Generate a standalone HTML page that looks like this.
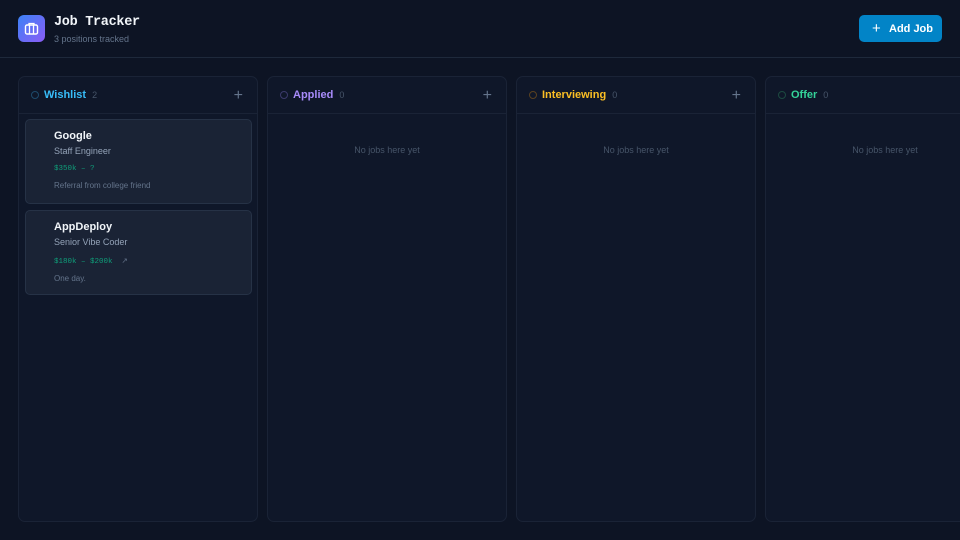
<!DOCTYPE html>
<html><head><meta charset="utf-8"><style>
*{box-sizing:border-box;margin:0;padding:0}
body{width:960px;height:540px;overflow:hidden;background:#0d1424;font-family:"Liberation Sans",sans-serif;position:relative}
.hdr{position:absolute;left:0;top:0;width:960px;height:58px;border-bottom:1px solid #1e293b}
.logo{position:absolute;left:18px;top:15px;width:27px;height:27px;border-radius:6px;background:linear-gradient(135deg,#3b82f6,#8b5cf6)}
.title{position:absolute;left:54px;top:15px;font-family:"Liberation Mono",monospace;font-weight:bold;font-size:13.5px;color:#f1f5f9;letter-spacing:-0.3px}
.sub{position:absolute;left:54px;top:34px;font-size:9px;color:#64748b}
.btn{position:absolute;left:859px;top:15px;width:83px;height:27px;border-radius:5px;background:#0284c7;color:#fff;font-weight:bold;font-size:11px;line-height:28px;padding-left:30px}
.btn:before{content:"+";position:absolute;left:13px;top:0px;font-size:15px;font-weight:normal}
.col{position:absolute;top:76px;width:240px;height:446px;border:1px solid #1a2336;border-radius:7px;background:#0f1729}
.ch{height:37px;border-bottom:1px solid #1a2336;position:relative}
.dot{position:absolute;left:12px;top:14px;width:8px;height:8px;border-radius:50%;border:1px solid}
.cn{position:absolute;left:25px;top:12px;font-size:11px;font-weight:bold}
.cnt{font-weight:normal;color:#475569;font-size:9px;margin-left:6px}
.plus{position:absolute;right:14px;top:10px;color:#64748b;font-size:16px}
.empty{text-align:center;color:#475569;font-size:9px;margin-top:31px}
.card{position:absolute;left:6px;width:227px;height:85px;border:1px solid #263246;border-radius:5px;background:#1a2335;padding:10px 0 0 28px}
.co{font-size:11px;font-weight:bold;color:#f1f5f9}
.ro{font-size:9px;color:#94a3b8;margin-top:4px}
.sal{font-family:"Liberation Mono",monospace;font-size:7.5px;color:#0f9f7a;margin-top:9px}
.nt{font-size:8px;color:#64748b;margin-top:8px}
</style></head><body>
<div class="hdr">
<div class="logo"><svg width="27" height="27" viewBox="0 0 27 27"><rect x="7.5" y="10" width="12" height="9" rx="1.5" fill="none" stroke="#fff" stroke-width="1.4"/><path d="M11 10V8.5h5V10M11.5 10v9M15.5 10v9" fill="none" stroke="#fff" stroke-width="1.3"/></svg></div>
<div class="title">Job Tracker</div>
<div class="sub">3 positions tracked</div>
<div class="btn">Add Job</div>
</div>
<div class="col" style="left:18px"><div class="ch"><span class="dot" style="border-color:#1e4a6b"></span><span class="cn" style="color:#38bdf8">Wishlist<span class="cnt">2</span></span><span class="plus">+</span></div>
<div class="card" style="top:42px"><div class="co">Google</div><div class="ro">Staff Engineer</div><div class="sal">$350k – ?</div><div class="nt">Referral from college friend</div></div>
<div class="card" style="top:133px"><div class="co">AppDeploy</div><div class="ro">Senior Vibe Coder</div><div class="sal">$180k – $200k &nbsp;<span style="color:#64748b">↗</span></div><div class="nt">One day.</div></div>
</div>
<div class="col" style="left:267px"><div class="ch"><span class="dot" style="border-color:#3b3a6b"></span><span class="cn" style="color:#a78bfa">Applied<span class="cnt">0</span></span><span class="plus">+</span></div><div class="empty">No jobs here yet</div></div>
<div class="col" style="left:516px"><div class="ch"><span class="dot" style="border-color:#5a4220"></span><span class="cn" style="color:#fbbf24">Interviewing<span class="cnt">0</span></span><span class="plus">+</span></div><div class="empty">No jobs here yet</div></div>
<div class="col" style="left:765px"><div class="ch"><span class="dot" style="border-color:#1c4a40"></span><span class="cn" style="color:#34d399">Offer<span class="cnt">0</span></span></div><div class="empty">No jobs here yet</div></div>
</body></html>
